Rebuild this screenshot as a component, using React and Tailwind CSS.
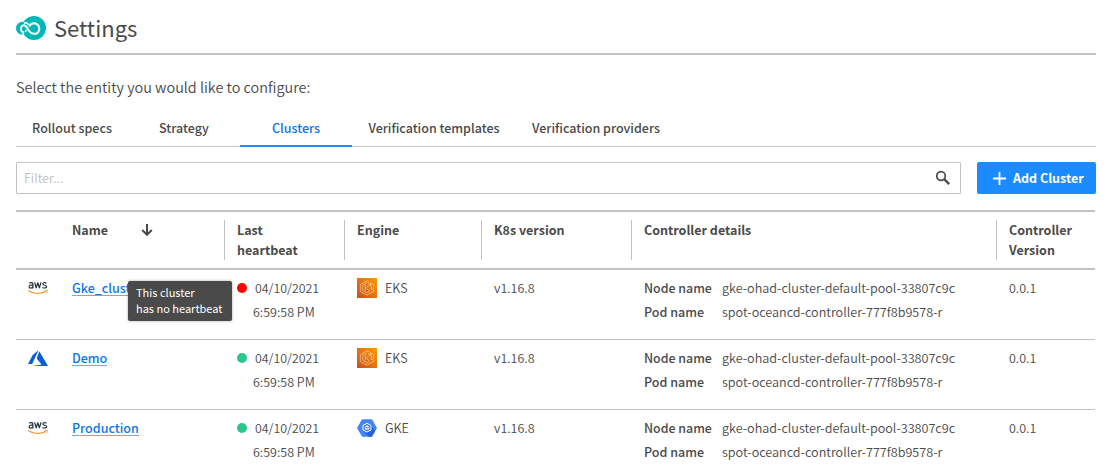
import React from "react";

const tabs = [
  { label: "Rollout specs", width: "w-28" },
  { label: "Strategy", width: "w-28" },
  { label: "Clusters", width: "w-28", active: true },
  { label: "Verification templates", width: "w-[164px]" },
  { label: "Verification providers", width: "w-40" },
];

const columns = ["Last heartbeat", "Engine", "K8s version", "Controller details", "Controller Version"];

const clusters = [
  { provider: "aws", name: "Gke_cluster", healthy: false, engine: "EKS", tooltip: true },
  { provider: "azure", name: "Demo", healthy: true, engine: "EKS" },
  { provider: "aws", name: "Production", healthy: true, engine: "GKE" },
];

const grid = "grid grid-cols-[208px_120px_137px_150px_365px_99px]";

function OceanLogo() {
  return (
    <svg className="block h-6 w-[30px]" viewBox="0 0 30 24" fill="none">
      <circle cx="18" cy="12" r="12" fill="#00b8b8" />
      <circle cx="6.4" cy="12.2" r="6.4" fill="#00b8b8" />
      <path
        d="M7.6 16.4 C5.2 15.6 4.6 13.4 5.1 11.5 C5.8 8.9 8.6 8.4 10.2 10.6 L13.2 15 C15.4 18.5 20.6 18.9 22.6 15.4 C24.5 11.8 22.2 7.4 18.2 7.2 C15.6 7.1 13.9 8.5 13.3 10.6"
        stroke="#fff"
        strokeWidth="2"
      />
      <path d="M10.4 13.8 L9.2 16 M7.6 16.8 L7 18.9" stroke="#fff" strokeWidth="1.6" />
      <path d="M8 7.4 C9.6 6.3 11.6 6.8 12.6 8.8" stroke="#fff" strokeWidth="1.5" />
    </svg>
  );
}

function SearchIcon() {
  return (
    <svg className="block size-4" viewBox="0 0 16 16" fill="none" stroke="#4a4a4a">
      <circle cx="6" cy="6" r="4.3" strokeWidth="1.7" />
      <path d="M9.2 9.2 L14.2 14.2" strokeWidth="2.4" />
    </svg>
  );
}

function AwsIcon() {
  return (
    <svg className="mt-[5px] block h-[14px] w-5" viewBox="0 0 20 14" fill="none">
      <g stroke="#252f3e" strokeWidth="1.2" strokeLinejoin="round">
        <path d="M1.2 2.2 C2.6 1.3 4.9 1.3 4.9 3 V7.4 M4.9 4.2 C3 3.8 1.1 4.1 1.1 5.7 C1.1 7.6 3.9 7.5 4.9 5.8" />
        <path d="M6.6 1.4 L8.2 6.8 L9.8 1.8 L11.4 6.8 L13 1.4" />
        <path d="M18.4 2.1 C16.7 1.4 14.9 1.6 14.9 2.9 C14.9 4.7 18.6 3.8 18.6 5.5 C18.6 7.3 16 7.3 14.5 6.4" />
      </g>
      <path d="M.3 9.4 C5.5 13.3 12.8 13.4 18 10.3" stroke="#f79420" strokeWidth="1.2" />
      <path d="M16.5 9.4 C17.8 9 19 8.9 19.3 9.3 C19.6 9.8 19.2 11.2 18.4 12.2" stroke="#f79420" strokeWidth=".9" />
    </svg>
  );
}

function AzureIcon() {
  return (
    <svg className="mt-1 block h-4 w-5" viewBox="0 0 20 16" fill="#0b5cd7">
      <path d="M10.6 0 L4.7 4.9 L0 14 H4.2 Z" />
      <path d="M11.3 1.2 L20 16 H4.2 L13.6 14.4 L8.7 8.5 Z" />
    </svg>
  );
}

function EksIcon() {
  return (
    <svg className="block size-5" viewBox="0 0 20 20" fill="none">
      <defs>
        <linearGradient id="eks" x1="0" y1="20" x2="20" y2="0" gradientUnits="userSpaceOnUse">
          <stop stopColor="#c8511b" />
          <stop offset="1" stopColor="#ff9900" />
        </linearGradient>
      </defs>
      <path d="M0 0H20V20H0Z" fill="url(#eks)" />
      <g stroke="#fff" strokeOpacity=".7" strokeWidth=".65">
        <path d="M12 3.7 L10 2.9 L3.3 6.5 V13.6 L10 17.1 L16.6 13.6 V12 M16.6 10.8 V6.5 L13.4 4.7 V7.4" />
        <path d="M9.6 5.1 L5.7 7.5 V12.5 L9.8 14.9 L13 13 M11 5.3 L14.2 7.5 V11.4 H16.6" />
        <path d="M8.2 7.3 V12.7 M12 7.3 L9.4 10 L12 12.7" />
      </g>
    </svg>
  );
}

function GkeIcon() {
  return (
    <svg className="block size-5" viewBox="0 0 20 20" fill="none">
      <path d="M5.6 1.2 H14.4 Q15 1.2 15.3 1.7 L19.7 9.4 Q20 10 19.7 10.6 L15.3 18.1 Q15 18.7 14.4 18.7 H5.6 Q5 18.7 4.7 18.1 L.3 10.6 Q0 10 .3 9.4 L4.7 1.7 Q5 1.2 5.6 1.2Z" fill="#4285f4" />
      <path d="M13.8 6.2 L18.2 13.2 L15.3 18.1 Q15 18.7 14.4 18.7 H11.8 L6.2 12.6Z" fill="#2463dc" />
      <path d="M10 5.3 L14 7.5 V11.9 L10 14.1 L6 11.9 V7.5Z" fill="#3b78e7" stroke="#fff" strokeWidth="1" />
      <path d="M10 7.2 L12.2 8.4 L10 9.4 L7.8 8.4Z M7.7 9.2 L9.6 10 V12.2 L7.7 11.1Z M12.3 9.2 L10.4 10 V12.2 L12.3 11.1Z" fill="#fff" />
    </svg>
  );
}

function ClusterRow({ cluster, last }) {
  return (
    <div className={`${grid} h-[70px] shrink-0 pt-1.5 leading-6 ${last ? "" : "border-b border-[#c2c2c2]"}`}>
      <div className="relative flex">
        <div className="w-14 pl-3">{cluster.provider === "aws" ? <AwsIcon /> : <AzureIcon />}</div>
        <a className="mt-[3px] h-[17px] border-b border-[#6cacf5] leading-[18px] font-medium text-[#0b76e8]">{cluster.name}</a>
        {cluster.tooltip && (
          <div className="absolute top-[5px] left-28 z-10 h-10 w-[104px] rounded-xs bg-[#4a4a4a] px-2 pt-[3px] text-[11px] leading-4 font-normal whitespace-nowrap text-white shadow-[0_0_3px_rgba(0,0,0,0.35)]">
            This cluster
            <br />
            has no heartbeat
          </div>
        )}
      </div>
      <div className="pl-[13px]">
        <div className="flex items-center text-[12.4px]">
          <span className={`mr-2 size-2.5 rounded-full ${cluster.healthy ? "bg-[#29c78a]" : "bg-[#ff0000]"}`} />
          04/10/2021
        </div>
        <div className="pl-4">6:59:58 PM</div>
      </div>
      <div className="flex h-6 items-center gap-2 pl-[13px]">
        {cluster.engine === "EKS" ? <EksIcon /> : <GkeIcon />}
        {cluster.engine}
      </div>
      <div className="pl-[13px]">v1.16.8</div>
      <div className="grid h-12 grid-cols-[78px_1fr] pl-[13px] text-[12.63px]">
        <span className="text-[12.4px] font-medium text-[#4a4a4a]">Node name</span>
        <span>gke-ohad-cluster-default-pool-33807c9c</span>
        <span className="text-[12.5px] font-medium text-[#4a4a4a]">Pod name</span>
        <span>spot-oceancd-controller-777f8b9578-r</span>
      </div>
      <div className="pl-[13px]">0.0.1</div>
    </div>
  );
}

export default function App() {
  return (
    <main className="flex h-[472px] flex-col overflow-hidden bg-white px-4 font-['Noto_Sans_CJK_SC',sans-serif] text-[12.5px] font-[350] text-[#4a4a4a]">
      <header className="flex h-[55px] w-[1080px] shrink-0 items-center gap-2 border-b-2 border-[#c2c2c2] pt-[3px]">
        <OceanLogo />
        <h1 className="-mt-[3px] text-[22px] leading-8 font-normal text-[#4a4a4a]">Settings</h1>
      </header>
      <p className="mt-5 shrink-0 text-[14.45px] leading-6">Select the entity you would like to configure:</p>
      <nav className="mt-3 flex h-9 w-[1080px] shrink-0 border-b border-[#c2c2c2]">
        {tabs.map((tab) => (
          <button
            key={tab.label}
            className={`-mb-px h-9 shrink-0 text-center font-medium whitespace-nowrap ${tab.width} ${
              tab.active ? "border-b-2 border-[#1b8cff] text-[#0b76e8]" : "border-b-2 border-transparent text-[#4a4a4a]"
            }`}
          >
            {tab.label}
          </button>
        ))}
      </nav>
      <div className="mt-[15px] flex h-8 w-[1080px] shrink-0 gap-4">
        <label className="flex w-[945px] items-center justify-between rounded-[1px] border border-[#c2c2c2] pr-[9px] pl-[7px]">
          <span className="text-[#bdbdbd]">Filter...</span>
          <SearchIcon />
        </label>
        <button className="flex w-[119px] items-center rounded-[2px] bg-[#1b8cff] pl-[15.5px] font-bold whitespace-nowrap text-white">
          <svg className="mr-[7.5px] size-[13px]" viewBox="0 0 13 13" stroke="#fff" strokeWidth="1.8">
            <path d="M6.5 0V13M0 6.5H13" />
          </svg>
          Add Cluster
        </button>
      </div>
      <section className="mt-4 flex w-[1079px] flex-col">
        <div className={`${grid} h-[60px] shrink-0 border-y-2 border-[#c2c2c2] py-2 leading-5 font-bold text-[#4a4a4a]`}>
          <div className="flex pl-14">
            <span className="w-[69px]">Name</span>
            <svg className="mt-1 h-3 w-3" viewBox="0 0 12 12" fill="none" stroke="#4a4a4a" strokeWidth="2">
              <path d="M6 0V11M1.2 6L6 10.8L10.8 6" />
            </svg>
          </div>
          {columns.map((column) => (
            <div key={column} className="h-10 border-l border-[#c2c2c2] pl-3">
              <div className={column.includes("Version") || column.includes("Last") ? "w-16" : ""}>{column}</div>
            </div>
          ))}
        </div>
        {clusters.map((cluster, index) => (
          <ClusterRow key={cluster.name} cluster={cluster} last={index === clusters.length - 1} />
        ))}
      </section>
    </main>
  );
}
